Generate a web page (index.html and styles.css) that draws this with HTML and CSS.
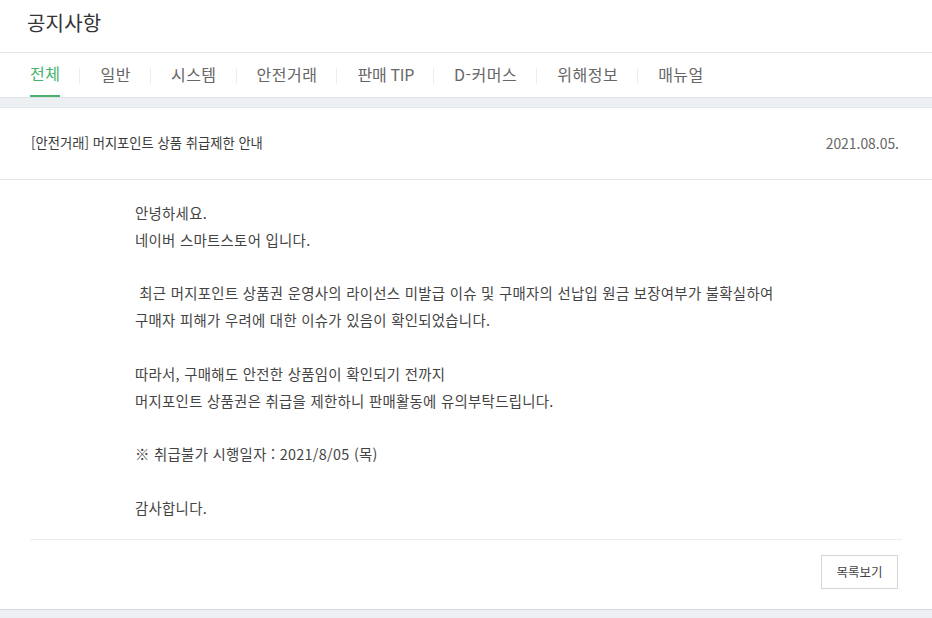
FILE: index.html
```html
<!DOCTYPE html>
<html lang="ko">
<head>
<meta charset="utf-8">
<title>공지사항</title>
<link rel="stylesheet" href="styles.css">
</head>
<body>
<header class="page-header">
  <h1 class="page-title">공지사항</h1>
</header>
<nav class="tabs">
  <a class="tab active"><span class="tab-label">전체</span></a>
  <a class="tab"><span class="tab-label">일반</span></a>
  <a class="tab"><span class="tab-label">시스템</span></a>
  <a class="tab"><span class="tab-label">안전거래</span></a>
  <a class="tab tight"><span class="tab-label">판매 TIP</span></a>
  <a class="tab"><span class="tab-label">D-커머스</span></a>
  <a class="tab"><span class="tab-label">위해정보</span></a>
  <a class="tab last"><span class="tab-label">매뉴얼</span></a>
</nav>
<div class="band"></div>
<main class="card">
  <div class="notice-head">
    <span class="notice-title">[안전거래] 머지포인트 상품 취급제한 안내</span>
    <span class="notice-date">2021.08.05.</span>
  </div>
  <div class="notice-body">
    <p>안녕하세요.<br>네이버 스마트스토어 입니다.<br><br>&nbsp;최근 머지포인트 상품권 운영사의 라이선스 미발급 이슈 및 구매자의 선납입 원금 보장여부가 불확실하여<br>구매자 피해가 우려에 대한 이슈가 있음이 확인되었습니다.<br><br>따라서, 구매해도 안전한 상품임이 확인되기 전까지<br>머지포인트 상품권은 취급을 제한하니 판매활동에 유의부탁드립니다.<br><br>※ 취급불가 시행일자 : 2021/8/05 (목)<br><br>감사합니다.</p>
  </div>
  <div class="notice-foot">
    <button class="list-btn" type="button">목록보기</button>
  </div>
</main>
<div class="band bottom"></div>
</body>
</html>
```
FILE: styles.css
```css
html, body {
  margin: 0;
  padding: 0;
  background: #ffffff;
}
body {
  font-family: "Noto Sans CJK KR", "Noto Sans", sans-serif;
  color: #333;
  overflow: hidden;
}
.page-header {
  height: 52px;
  border-bottom: 1px solid #e4e4e4;
  padding-left: 27px;
  display: flex;
  align-items: center;
}
.page-title {
  margin: 0;
  margin-top: -8px;
  font-size: 20px;
  font-weight: 400;
  color: #333;
  letter-spacing: 0.2px;
}
.tabs {
  height: 44px;
  display: flex;
  align-items: stretch;
  padding-left: 30px;
}
.tab {
  display: flex;
  align-items: center;
  padding: 0 20px;
  position: relative;
  font-size: 16px;
  letter-spacing: 0.5px;
  color: #666;
  cursor: pointer;
}
.tab.tight {
  letter-spacing: -0.3px;
}
.tab:first-child {
  padding-left: 0;
}
.tab::after {
  content: "";
  position: absolute;
  right: 0;
  top: 15px;
  width: 1px;
  height: 16px;
  background: #ececec;
}
.tab.last::after {
  display: none;
}
.tab-label {
  height: 44px;
  line-height: 44px;
  box-sizing: border-box;
  margin-top: -2px;
}
.tab.active {
  color: #44b36d;
}
.tab.active .tab-label {
  border-bottom: 2px solid #49b06e;
  margin-top: 0;
  line-height: 40px;
}
.band {
  height: 9px;
  background: #edf0f3;
  border-top: 1px solid #dfe2e6;
  border-bottom: 1px solid #e3e6ea;
}
.band.bottom {
  border-bottom: none;
  border-top: 1px solid #d6dade;
  height: 12px;
}
.card {
  background: #fff;
}
.notice-head {
  height: 71px;
  display: flex;
  align-items: center;
  justify-content: space-between;
  padding: 0 33px 0 31px;
  border-bottom: 1px solid #e4e4e4;
}
.notice-title {
  font-size: 13.3px;
  color: #3a3a3a;
  margin-top: -2px;
}
.notice-date {
  font-size: 13.9px;
  color: #666;
  margin-top: -2px;
}
.notice-body {
  margin: 0 30px;
  padding: 20px 0 17px 105px;
  border-bottom: 1px solid #ececec;
}
.notice-body p {
  margin: 0;
  font-size: 14.4px;
  letter-spacing: 0.3px;
  line-height: 26.8px;
  color: #444;
}
.notice-foot {
  display: flex;
  justify-content: flex-end;
  padding: 15px 34px 20px 0;
}
.list-btn {
  width: 77px;
  height: 34px;
  border: 1px solid #d6d6d6;
  background: #fff;
  font-family: "Noto Sans CJK KR", "Noto Sans", sans-serif;
  font-size: 12.5px;
  color: #444;
  padding: 0;
  cursor: pointer;
}
```
